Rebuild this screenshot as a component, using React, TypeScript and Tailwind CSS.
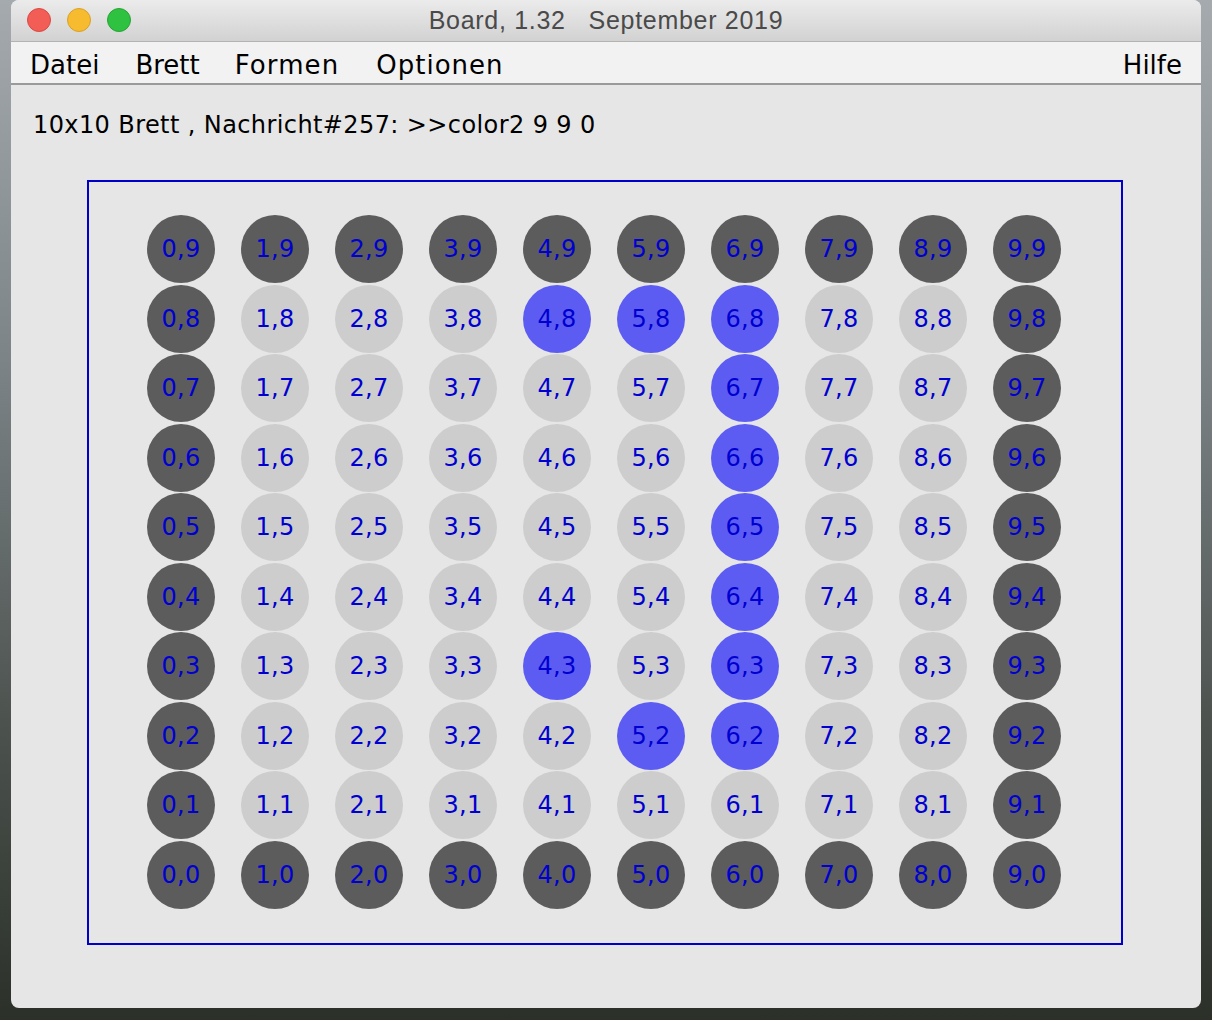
import React from "react";

const BLUE = new Set(["4,8", "5,8", "6,8", "6,7", "6,6", "6,5", "6,4", "6,3", "4,3", "5,2", "6,2"]);

function Cell({ x, y }: { x: number; y: number }) {
  const key = `${x},${y}`;
  let cls = "bg-[#cdcdcd]";
  if (BLUE.has(key)) cls = "bg-[#5c5cf2]";
  else if (y === 0 || y === 9 || x === 0 || x === 9) cls = "bg-[#5c5c5c]";
  return (
    <div className={`w-[68px] h-[68px] rounded-full flex items-center justify-center text-[24px] tracking-[0.3px] text-[#0000d0] leading-none ${cls}`}>
      {key}
    </div>
  );
}

export default function App() {
  const rows = [9, 8, 7, 6, 5, 4, 3, 2, 1, 0];
  const cols = [0, 1, 2, 3, 4, 5, 6, 7, 8, 9];
  return (
    <div
      className="w-[1212px] h-[1020px] overflow-hidden flex flex-col pl-[11px] pr-[11px] pb-[12px] bg-[linear-gradient(180deg,#a4aaae_0%,#7d8488_35%,#4d5450_70%,#2b3129_100%)]"
      style={{ fontFamily: '"DejaVu Sans", "Liberation Sans", sans-serif' }}
    >
      <div className="flex-1 flex flex-col rounded-[8px] overflow-hidden bg-[#e6e6e6]">
        {/* title bar */}
        <div className="relative h-[42px] shrink-0 flex items-center justify-center bg-[linear-gradient(180deg,#ebebeb,#d2d2d2)] border-b border-[#b3b3b3]">
          <div className="absolute left-[16px] top-[8px] flex gap-[16px]">
            <div className="w-[24px] h-[24px] rounded-full bg-[#f25d56] border border-[#d94a43]" />
            <div className="w-[24px] h-[24px] rounded-full bg-[#f6bb2e] border border-[#d9a128]" />
            <div className="w-[24px] h-[24px] rounded-full bg-[#2fc140] border border-[#27a437]" />
          </div>
          <span
            className="text-[25px] tracking-[0.7px] text-[#4a4a4a] whitespace-pre mt-[1px]"
            style={{ fontFamily: '"Liberation Sans", "DejaVu Sans", sans-serif' }}
          >
            {"Board, 1.32   September 2019"}
          </span>
        </div>
        {/* menu bar */}
        <div className="h-[43px] shrink-0 flex items-center bg-[#f2f2f2] border-b-2 border-[#9a9a9a] text-[26px] text-black pl-[19px] pr-[19px] pt-[5px]">
          <span>Datei</span>
          <span className="ml-[36px]">Brett</span>
          <span className="ml-[35px] tracking-[1.1px]">Formen</span>
          <span className="ml-[37px] tracking-[1px]">Optionen</span>
          <span className="ml-auto">Hilfe</span>
        </div>
        {/* content */}
        <div className="flex-1 flex flex-col pl-[22px]">
          <div className="mt-[25px] text-[24px] tracking-[0.4px] leading-[30px] text-black whitespace-pre">
            {"10x10 Brett , Nachricht#257: >>color2 9 9 0"}
          </div>
          <div className="mt-[40px] ml-[54px] w-[1036px] h-[765px] border-2 border-[#0000c8] pt-[33px] pl-[58px]">
            <div className="flex flex-col gap-y-[1.5px]">
              {rows.map((y) => (
                <div key={y} className="flex gap-x-[26px]">
                  {cols.map((x) => (
                    <Cell key={x} x={x} y={y} />
                  ))}
                </div>
              ))}
            </div>
          </div>
        </div>
      </div>
    </div>
  );
}
